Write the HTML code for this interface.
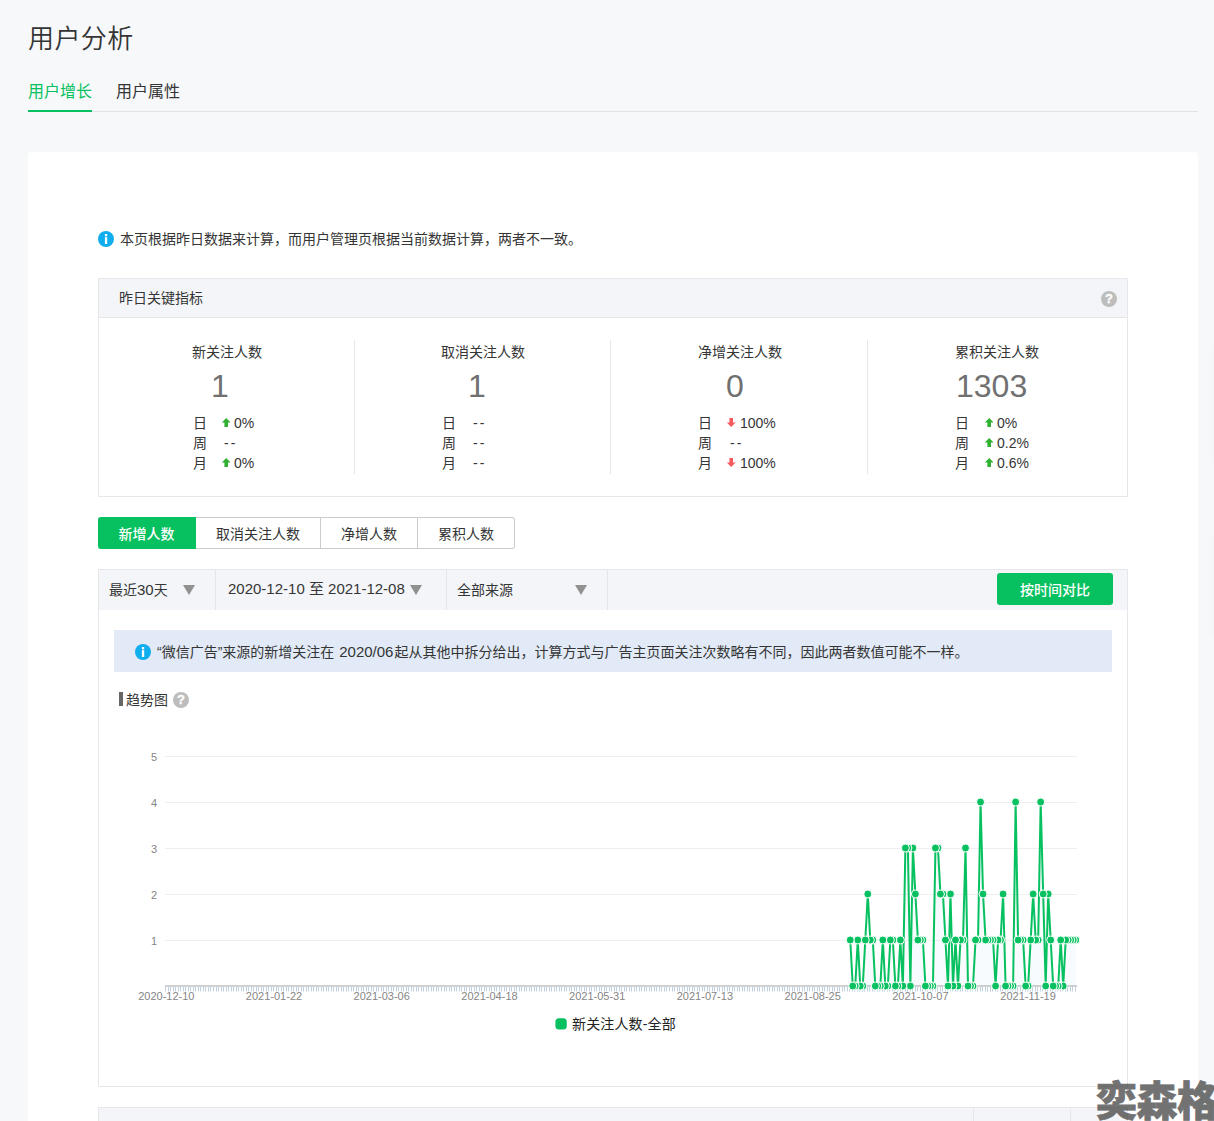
<!DOCTYPE html>
<html lang="zh-CN">
<head>
<meta charset="utf-8">
<title>用户分析</title>
<style>
*{box-sizing:border-box;margin:0;padding:0}
html,body{width:1214px;height:1121px;overflow:hidden;background:#f6f8f9}
body{position:relative;font-family:"Liberation Sans","Noto Sans CJK SC",sans-serif;font-size:14px;color:#353535;line-height:20px}
.abs{position:absolute;white-space:nowrap}
h1.title{left:28px;top:20px;font-size:26px;line-height:38px;font-weight:350;color:#353535;letter-spacing:0.4px}
.tab{top:80px;font-size:16px;line-height:24px}
.tab.on{left:28px;color:#07c160}
.tabline{left:28px;top:111px;width:1170px;height:1px;background:#e1e3e6}
.tabon{left:28px;top:110px;width:64px;height:2px;background:#07c160}
.panel{left:28px;top:152px;width:1170px;height:980px;background:#fff;border-radius:4px}
.ico{border-radius:50%;color:#fff;text-align:center;font-weight:bold}
.ico.info{width:16px;height:16px;background:#10aeef;font-size:13px;line-height:16px;font-family:"Liberation Sans",sans-serif}
.ico.help{width:16px;height:16px;background:#bdbdbd;font-size:13px;line-height:16px;-webkit-text-stroke:.3px #fff}
.box{border:1px solid #e7e7eb;background:#fff}
.boxhd{background:#f4f5f9;border-bottom:1px solid #e7e7eb}
.col{top:340px;width:257px;height:132px;text-align:center}
.vline{top:340px;width:1px;height:134px;background:#e7e7eb}
.num{font-size:32px;line-height:40px;color:#707070;font-weight:400;font-family:"Liberation Sans","Noto Sans CJK SC",sans-serif}
.row{font-size:14px;line-height:20px;height:20px}
.dash{letter-spacing:2.2px}
.seg{top:517px;height:32px;line-height:32px;text-align:center;border:1px solid #cbccd0;border-left:none;background:#fff;color:#353535}
.seg.on{background:#07c160;border-color:#07c160;color:#fff;border-radius:3px 0 0 3px;font-weight:500}
.fbar{left:99px;top:570px;width:1028px;height:40px;background:#f4f5f9}
.fdiv{top:570px;width:1px;height:40px;background:#e4e5e9}
.tri{width:0;height:0;border-left:6px solid transparent;border-right:6px solid transparent;border-top:10px solid #919191}
.btn{left:997px;top:573px;width:116px;height:32px;line-height:34px;background:#07c160;color:#fff;text-align:center;border-radius:3px;font-weight:500}
.notice{left:114px;top:630px;width:998px;height:42px;background:#e1eaf6}
svg.chart{position:absolute;left:99px;top:720px}
svg .ax{font-family:"Liberation Sans",sans-serif;font-size:11px;fill:#858585}
svg .lg{font-family:"Liberation Sans","Noto Sans CJK SC",sans-serif;font-size:14px;fill:#222;letter-spacing:0.15px}
.wm{left:1096px;top:1072px;font-size:41px;line-height:60px;font-weight:900;color:#3c3c3c;opacity:.72;font-family:"Liberation Sans","Noto Sans CJK SC",sans-serif;letter-spacing:-0.5px;-webkit-text-stroke:0.8px #3c3c3c}
</style>
</head>
<body>
<h1 class="abs title">用户分析</h1>
<div class="abs tab on">用户增长</div>
<div class="abs tab" style="left:116px">用户属性</div>
<div class="abs tabline"></div>
<div class="abs tabon"></div>

<div class="abs panel"></div>

<svg class="abs" style="left:98px;top:231px" width="16" height="16" viewBox="0 0 16 16"><circle cx="8" cy="8" r="8" fill="#10aeef"/><rect x="6.9" y="3" width="2.3" height="2.3" fill="#fff"/><rect x="6.9" y="6.2" width="2.3" height="6.8" fill="#fff"/></svg>
<div class="abs" style="left:120px;top:229px">本页根据昨日数据来计算，而用户管理页根据当前数据计算，两者不一致。</div>

<!-- key metrics -->
<div class="abs box" style="left:98px;top:278px;width:1030px;height:219px"></div>
<div class="abs boxhd" style="left:99px;top:279px;width:1028px;height:39px"></div>
<div class="abs" style="left:119px;top:288px">昨日关键指标</div>
<div class="abs ico help" style="left:1101px;top:291px">?</div>

<div class="abs vline" style="left:354px"></div>
<div class="abs vline" style="left:610px"></div>
<div class="abs vline" style="left:867px"></div>

<div class="abs" style="left:192px;top:342px">新关注人数</div>
<div class="abs num" style="left:211px;top:366px">1</div>
<div class="abs" style="left:193px;top:413px">日</div><div class="abs" style="left:193px;top:433px">周</div><div class="abs" style="left:193px;top:453px">月</div>
<svg class="abs" style="left:221px;top:418px" width="11" height="10" viewBox="0 0 11 10"><path d="M5.2 0L9.6 4.6H7V9H3.4V4.6H0.8Z" fill="#30b030"/></svg>
<div class="abs" style="left:234px;top:413px">0%</div>
<div class="abs dash" style="left:224px;top:433px">--</div>
<svg class="abs" style="left:221px;top:458px" width="11" height="10" viewBox="0 0 11 10"><path d="M5.2 0L9.6 4.6H7V9H3.4V4.6H0.8Z" fill="#30b030"/></svg>
<div class="abs" style="left:234px;top:453px">0%</div>

<div class="abs" style="left:441px;top:342px">取消关注人数</div>
<div class="abs num" style="left:468px;top:366px">1</div>
<div class="abs" style="left:442px;top:413px">日</div><div class="abs" style="left:442px;top:433px">周</div><div class="abs" style="left:442px;top:453px">月</div>
<div class="abs dash" style="left:473px;top:413px">--</div>
<div class="abs dash" style="left:473px;top:433px">--</div>
<div class="abs dash" style="left:473px;top:453px">--</div>

<div class="abs" style="left:698px;top:342px">净增关注人数</div>
<div class="abs num" style="left:726px;top:366px">0</div>
<div class="abs" style="left:698px;top:413px">日</div><div class="abs" style="left:698px;top:433px">周</div><div class="abs" style="left:698px;top:453px">月</div>
<svg class="abs" style="left:726px;top:418px" width="11" height="10" viewBox="0 0 11 10"><path d="M5.2 9L9.6 4.4H7V0H3.4V4.4H0.8Z" fill="#f55a60"/></svg>
<div class="abs" style="left:740px;top:413px">100%</div>
<div class="abs dash" style="left:730px;top:433px">--</div>
<svg class="abs" style="left:726px;top:458px" width="11" height="10" viewBox="0 0 11 10"><path d="M5.2 9L9.6 4.4H7V0H3.4V4.4H0.8Z" fill="#f55a60"/></svg>
<div class="abs" style="left:740px;top:453px">100%</div>

<div class="abs" style="left:955px;top:342px">累积关注人数</div>
<div class="abs num" style="left:956px;top:366px">1303</div>
<div class="abs" style="left:955px;top:413px">日</div><div class="abs" style="left:955px;top:433px">周</div><div class="abs" style="left:955px;top:453px">月</div>
<svg class="abs" style="left:984px;top:418px" width="11" height="10" viewBox="0 0 11 10"><path d="M5.2 0L9.6 4.6H7V9H3.4V4.6H0.8Z" fill="#30b030"/></svg>
<div class="abs" style="left:997px;top:413px">0%</div>
<svg class="abs" style="left:984px;top:438px" width="11" height="10" viewBox="0 0 11 10"><path d="M5.2 0L9.6 4.6H7V9H3.4V4.6H0.8Z" fill="#30b030"/></svg>
<div class="abs" style="left:997px;top:433px">0.2%</div>
<svg class="abs" style="left:984px;top:458px" width="11" height="10" viewBox="0 0 11 10"><path d="M5.2 0L9.6 4.6H7V9H3.4V4.6H0.8Z" fill="#30b030"/></svg>
<div class="abs" style="left:997px;top:453px">0.6%</div>

<!-- segment tabs -->
<div class="abs seg on" style="left:98px;width:98px">新增人数</div>
<div class="abs seg" style="left:196px;width:125px">取消关注人数</div>
<div class="abs seg" style="left:321px;width:97px">净增人数</div>
<div class="abs seg" style="left:418px;width:97px;border-radius:0 3px 3px 0">累积人数</div>

<!-- chart container -->
<div class="abs box" style="left:98px;top:569px;width:1030px;height:518px"></div>
<div class="abs fbar"></div>
<div class="abs fdiv" style="left:215px"></div>
<div class="abs fdiv" style="left:446px"></div>
<div class="abs fdiv" style="left:607px"></div>
<div class="abs" style="left:109px;top:580px">最近<span style="font-size:15px;line-height:20px">30</span>天</div>
<div class="abs tri" style="left:183px;top:585px"></div>
<div class="abs" style="left:228px;top:579px;font-size:15px">2020-12-10 至 2021-12-08</div>
<div class="abs tri" style="left:410px;top:585px"></div>
<div class="abs" style="left:457px;top:580px">全部来源</div>
<div class="abs tri" style="left:575px;top:585px"></div>
<div class="abs btn">按时间对比</div>

<div class="abs notice"></div>
<svg class="abs" style="left:135px;top:644px" width="16" height="16" viewBox="0 0 16 16"><circle cx="8" cy="8" r="8" fill="#10aeef"/><rect x="6.9" y="3" width="2.3" height="2.3" fill="#fff"/><rect x="6.9" y="6.2" width="2.3" height="6.8" fill="#fff"/></svg>
<div class="abs" style="left:157px;top:642px">“微信广告”来源的新增关注在 <span style="font-size:15px;line-height:20px;margin:0 1px">2020/06</span>起从其他中拆分给出，计算方式与广告主页面关注次数略有不同，因此两者数值可能不一样。</div>

<div class="abs" style="left:119px;top:692px;width:4px;height:14px;background:#666"></div>
<div class="abs" style="left:126px;top:690px">趋势图</div>
<div class="abs ico help" style="left:173px;top:692px">?</div>

<svg class="chart" width="1028" height="380" viewBox="99 720 1028 380">
<path d="M165.0 940.5H1077.0" stroke="#efefef" stroke-width="1"/>
<path d="M165.0 894.5H1077.0" stroke="#efefef" stroke-width="1"/>
<path d="M165.0 848.5H1077.0" stroke="#efefef" stroke-width="1"/>
<path d="M165.0 802.5H1077.0" stroke="#efefef" stroke-width="1"/>
<path d="M165.0 756.5H1077.0" stroke="#efefef" stroke-width="1"/>
<path d="M165.5 986.8v4.7M168.5 986.8v4.7M170.5 986.8v4.7M173.5 986.8v4.7M175.5 986.8v4.7M178.5 986.8v4.7M180.5 986.8v4.7M183.5 986.8v4.7M185.5 986.8v4.7M188.5 986.8v4.7M190.5 986.8v4.7M193.5 986.8v4.7M195.5 986.8v4.7M198.5 986.8v4.7M200.5 986.8v4.7M203.5 986.8v4.7M205.5 986.8v4.7M208.5 986.8v4.7M210.5 986.8v4.7M213.5 986.8v4.7M216.5 986.8v4.7M218.5 986.8v4.7M221.5 986.8v4.7M223.5 986.8v4.7M226.5 986.8v4.7M228.5 986.8v4.7M231.5 986.8v4.7M233.5 986.8v4.7M236.5 986.8v4.7M238.5 986.8v4.7M241.5 986.8v4.7M243.5 986.8v4.7M246.5 986.8v4.7M248.5 986.8v4.7M251.5 986.8v4.7M253.5 986.8v4.7M256.5 986.8v4.7M258.5 986.8v4.7M261.5 986.8v4.7M263.5 986.8v4.7M266.5 986.8v4.7M268.5 986.8v4.7M271.5 986.8v4.7M273.5 986.8v4.7M276.5 986.8v4.7M278.5 986.8v4.7M281.5 986.8v4.7M283.5 986.8v4.7M286.5 986.8v4.7M288.5 986.8v4.7M291.5 986.8v4.7M293.5 986.8v4.7M296.5 986.8v4.7M298.5 986.8v4.7M301.5 986.8v4.7M303.5 986.8v4.7M306.5 986.8v4.7M308.5 986.8v4.7M311.5 986.8v4.7M313.5 986.8v4.7M316.5 986.8v4.7M318.5 986.8v4.7M321.5 986.8v4.7M323.5 986.8v4.7M326.5 986.8v4.7M328.5 986.8v4.7M331.5 986.8v4.7M333.5 986.8v4.7M336.5 986.8v4.7M338.5 986.8v4.7M341.5 986.8v4.7M343.5 986.8v4.7M346.5 986.8v4.7M348.5 986.8v4.7M351.5 986.8v4.7M353.5 986.8v4.7M356.5 986.8v4.7M358.5 986.8v4.7M361.5 986.8v4.7M363.5 986.8v4.7M366.5 986.8v4.7M368.5 986.8v4.7M371.5 986.8v4.7M373.5 986.8v4.7M376.5 986.8v4.7M378.5 986.8v4.7M381.5 986.8v4.7M383.5 986.8v4.7M386.5 986.8v4.7M388.5 986.8v4.7M391.5 986.8v4.7M393.5 986.8v4.7M396.5 986.8v4.7M398.5 986.8v4.7M401.5 986.8v4.7M403.5 986.8v4.7M406.5 986.8v4.7M408.5 986.8v4.7M411.5 986.8v4.7M413.5 986.8v4.7M416.5 986.8v4.7M418.5 986.8v4.7M421.5 986.8v4.7M423.5 986.8v4.7M426.5 986.8v4.7M428.5 986.8v4.7M431.5 986.8v4.7M433.5 986.8v4.7M436.5 986.8v4.7M438.5 986.8v4.7M441.5 986.8v4.7M444.5 986.8v4.7M446.5 986.8v4.7M449.5 986.8v4.7M451.5 986.8v4.7M454.5 986.8v4.7M456.5 986.8v4.7M459.5 986.8v4.7M461.5 986.8v4.7M464.5 986.8v4.7M466.5 986.8v4.7M469.5 986.8v4.7M471.5 986.8v4.7M474.5 986.8v4.7M476.5 986.8v4.7M479.5 986.8v4.7M481.5 986.8v4.7M484.5 986.8v4.7M486.5 986.8v4.7M489.5 986.8v4.7M491.5 986.8v4.7M494.5 986.8v4.7M496.5 986.8v4.7M499.5 986.8v4.7M501.5 986.8v4.7M504.5 986.8v4.7M506.5 986.8v4.7M509.5 986.8v4.7M511.5 986.8v4.7M514.5 986.8v4.7M516.5 986.8v4.7M519.5 986.8v4.7M521.5 986.8v4.7M524.5 986.8v4.7M526.5 986.8v4.7M529.5 986.8v4.7M531.5 986.8v4.7M534.5 986.8v4.7M536.5 986.8v4.7M539.5 986.8v4.7M541.5 986.8v4.7M544.5 986.8v4.7M546.5 986.8v4.7M549.5 986.8v4.7M551.5 986.8v4.7M554.5 986.8v4.7M556.5 986.8v4.7M559.5 986.8v4.7M561.5 986.8v4.7M564.5 986.8v4.7M566.5 986.8v4.7M569.5 986.8v4.7M571.5 986.8v4.7M574.5 986.8v4.7M576.5 986.8v4.7M579.5 986.8v4.7M581.5 986.8v4.7M584.5 986.8v4.7M586.5 986.8v4.7M589.5 986.8v4.7M591.5 986.8v4.7M594.5 986.8v4.7M596.5 986.8v4.7M599.5 986.8v4.7M601.5 986.8v4.7M604.5 986.8v4.7M606.5 986.8v4.7M609.5 986.8v4.7M611.5 986.8v4.7M614.5 986.8v4.7M616.5 986.8v4.7M619.5 986.8v4.7M621.5 986.8v4.7M624.5 986.8v4.7M626.5 986.8v4.7M629.5 986.8v4.7M631.5 986.8v4.7M634.5 986.8v4.7M636.5 986.8v4.7M639.5 986.8v4.7M641.5 986.8v4.7M644.5 986.8v4.7M646.5 986.8v4.7M649.5 986.8v4.7M651.5 986.8v4.7M654.5 986.8v4.7M656.5 986.8v4.7M659.5 986.8v4.7M661.5 986.8v4.7M664.5 986.8v4.7M666.5 986.8v4.7M669.5 986.8v4.7M672.5 986.8v4.7M674.5 986.8v4.7M677.5 986.8v4.7M679.5 986.8v4.7M682.5 986.8v4.7M684.5 986.8v4.7M687.5 986.8v4.7M689.5 986.8v4.7M692.5 986.8v4.7M694.5 986.8v4.7M697.5 986.8v4.7M699.5 986.8v4.7M702.5 986.8v4.7M704.5 986.8v4.7M707.5 986.8v4.7M709.5 986.8v4.7M712.5 986.8v4.7M714.5 986.8v4.7M717.5 986.8v4.7M719.5 986.8v4.7M722.5 986.8v4.7M724.5 986.8v4.7M727.5 986.8v4.7M729.5 986.8v4.7M732.5 986.8v4.7M734.5 986.8v4.7M737.5 986.8v4.7M739.5 986.8v4.7M742.5 986.8v4.7M744.5 986.8v4.7M747.5 986.8v4.7M749.5 986.8v4.7M752.5 986.8v4.7M754.5 986.8v4.7M757.5 986.8v4.7M759.5 986.8v4.7M762.5 986.8v4.7M764.5 986.8v4.7M767.5 986.8v4.7M769.5 986.8v4.7M772.5 986.8v4.7M774.5 986.8v4.7M777.5 986.8v4.7M779.5 986.8v4.7M782.5 986.8v4.7M784.5 986.8v4.7M787.5 986.8v4.7M789.5 986.8v4.7M792.5 986.8v4.7M794.5 986.8v4.7M797.5 986.8v4.7M799.5 986.8v4.7M802.5 986.8v4.7M804.5 986.8v4.7M807.5 986.8v4.7M809.5 986.8v4.7M812.5 986.8v4.7M814.5 986.8v4.7M817.5 986.8v4.7M819.5 986.8v4.7M822.5 986.8v4.7M824.5 986.8v4.7M827.5 986.8v4.7M829.5 986.8v4.7M832.5 986.8v4.7M834.5 986.8v4.7M837.5 986.8v4.7M839.5 986.8v4.7M842.5 986.8v4.7M844.5 986.8v4.7M847.5 986.8v4.7M849.5 986.8v4.7M852.5 986.8v4.7M854.5 986.8v4.7M857.5 986.8v4.7M859.5 986.8v4.7M862.5 986.8v4.7M864.5 986.8v4.7M867.5 986.8v4.7M869.5 986.8v4.7M872.5 986.8v4.7M874.5 986.8v4.7M877.5 986.8v4.7M879.5 986.8v4.7M882.5 986.8v4.7M884.5 986.8v4.7M887.5 986.8v4.7M889.5 986.8v4.7M892.5 986.8v4.7M894.5 986.8v4.7M897.5 986.8v4.7M900.5 986.8v4.7M902.5 986.8v4.7M905.5 986.8v4.7M907.5 986.8v4.7M910.5 986.8v4.7M912.5 986.8v4.7M915.5 986.8v4.7M917.5 986.8v4.7M920.5 986.8v4.7M922.5 986.8v4.7M925.5 986.8v4.7M927.5 986.8v4.7M930.5 986.8v4.7M932.5 986.8v4.7M935.5 986.8v4.7M937.5 986.8v4.7M940.5 986.8v4.7M942.5 986.8v4.7M945.5 986.8v4.7M947.5 986.8v4.7M950.5 986.8v4.7M952.5 986.8v4.7M955.5 986.8v4.7M957.5 986.8v4.7M960.5 986.8v4.7M962.5 986.8v4.7M965.5 986.8v4.7M967.5 986.8v4.7M970.5 986.8v4.7M972.5 986.8v4.7M975.5 986.8v4.7M977.5 986.8v4.7M980.5 986.8v4.7M982.5 986.8v4.7M985.5 986.8v4.7M987.5 986.8v4.7M990.5 986.8v4.7M992.5 986.8v4.7M995.5 986.8v4.7M997.5 986.8v4.7M1000.5 986.8v4.7M1002.5 986.8v4.7M1005.5 986.8v4.7M1007.5 986.8v4.7M1010.5 986.8v4.7M1012.5 986.8v4.7M1015.5 986.8v4.7M1017.5 986.8v4.7M1020.5 986.8v4.7M1022.5 986.8v4.7M1025.5 986.8v4.7M1027.5 986.8v4.7M1030.5 986.8v4.7M1032.5 986.8v4.7M1035.5 986.8v4.7M1037.5 986.8v4.7M1040.5 986.8v4.7M1042.5 986.8v4.7M1045.5 986.8v4.7M1047.5 986.8v4.7M1050.5 986.8v4.7M1052.5 986.8v4.7M1055.5 986.8v4.7M1057.5 986.8v4.7M1060.5 986.8v4.7M1062.5 986.8v4.7M1065.5 986.8v4.7M1067.5 986.8v4.7M1070.5 986.8v4.7M1072.5 986.8v4.7M1075.5 986.8v4.7" stroke="#c0d0e0" stroke-width="1" fill="none"/>
<path d="M165.0 986H1077.0" stroke="#c2c2c2" stroke-width="1.6"/>
<path d="M850.25 940.00 L852.76 986.00 L855.26 986.00 L857.77 940.00 L860.27 986.00 L862.78 986.00 L865.29 940.00 L867.79 894.00 L870.30 940.00 L872.80 940.00 L875.31 986.00 L877.81 986.00 L880.32 986.00 L882.82 940.00 L885.33 986.00 L887.84 986.00 L890.34 940.00 L892.85 940.00 L895.35 986.00 L897.86 986.00 L900.36 940.00 L902.87 986.00 L905.37 848.00 L907.88 848.00 L910.38 986.00 L912.89 848.00 L915.40 894.00 L917.90 940.00 L920.41 940.00 L922.91 940.00 L925.42 986.00 L927.92 986.00 L930.43 986.00 L932.93 986.00 L935.44 848.00 L937.95 848.00 L940.45 894.00 L942.96 894.00 L945.46 940.00 L947.97 986.00 L950.47 894.00 L952.98 986.00 L955.48 940.00 L957.99 986.00 L960.49 940.00 L963.00 940.00 L965.51 848.00 L968.01 986.00 L970.52 986.00 L973.02 986.00 L975.53 940.00 L978.03 940.00 L980.54 802.00 L983.04 894.00 L985.55 940.00 L988.05 940.00 L990.56 940.00 L993.07 940.00 L995.57 986.00 L998.08 940.00 L1000.58 940.00 L1003.09 894.00 L1005.59 986.00 L1008.10 986.00 L1010.60 986.00 L1013.11 986.00 L1015.62 802.00 L1018.12 940.00 L1020.63 940.00 L1023.13 940.00 L1025.64 986.00 L1028.14 986.00 L1030.65 940.00 L1033.15 894.00 L1035.66 940.00 L1038.16 940.00 L1040.67 802.00 L1043.18 894.00 L1045.68 986.00 L1048.19 894.00 L1050.69 940.00 L1053.20 986.00 L1055.70 986.00 L1058.21 986.00 L1060.71 940.00 L1063.22 986.00 L1065.73 940.00 L1068.23 940.00 L1070.74 940.00 L1073.24 940.00 L1075.75 940.00 L1075.75 986.0 L850.25 986.0Z" fill="#3d8fd1" fill-opacity="0.04"/>
<path d="M850.25 940.00 L852.76 986.00 L855.26 986.00 L857.77 940.00 L860.27 986.00 L862.78 986.00 L865.29 940.00 L867.79 894.00 L870.30 940.00 L872.80 940.00 L875.31 986.00 L877.81 986.00 L880.32 986.00 L882.82 940.00 L885.33 986.00 L887.84 986.00 L890.34 940.00 L892.85 940.00 L895.35 986.00 L897.86 986.00 L900.36 940.00 L902.87 986.00 L905.37 848.00 L907.88 848.00 L910.38 986.00 L912.89 848.00 L915.40 894.00 L917.90 940.00 L920.41 940.00 L922.91 940.00 L925.42 986.00 L927.92 986.00 L930.43 986.00 L932.93 986.00 L935.44 848.00 L937.95 848.00 L940.45 894.00 L942.96 894.00 L945.46 940.00 L947.97 986.00 L950.47 894.00 L952.98 986.00 L955.48 940.00 L957.99 986.00 L960.49 940.00 L963.00 940.00 L965.51 848.00 L968.01 986.00 L970.52 986.00 L973.02 986.00 L975.53 940.00 L978.03 940.00 L980.54 802.00 L983.04 894.00 L985.55 940.00 L988.05 940.00 L990.56 940.00 L993.07 940.00 L995.57 986.00 L998.08 940.00 L1000.58 940.00 L1003.09 894.00 L1005.59 986.00 L1008.10 986.00 L1010.60 986.00 L1013.11 986.00 L1015.62 802.00 L1018.12 940.00 L1020.63 940.00 L1023.13 940.00 L1025.64 986.00 L1028.14 986.00 L1030.65 940.00 L1033.15 894.00 L1035.66 940.00 L1038.16 940.00 L1040.67 802.00 L1043.18 894.00 L1045.68 986.00 L1048.19 894.00 L1050.69 940.00 L1053.20 986.00 L1055.70 986.00 L1058.21 986.00 L1060.71 940.00 L1063.22 986.00 L1065.73 940.00 L1068.23 940.00 L1070.74 940.00 L1073.24 940.00 L1075.75 940.00" fill="none" stroke="#07c160" stroke-width="2" stroke-linejoin="round" stroke-linecap="round"/>
<circle cx="1075.75" cy="940.00" r="4" fill="#07c160" stroke="#fff" stroke-width="1"/>
<circle cx="1073.24" cy="940.00" r="4" fill="#07c160" stroke="#fff" stroke-width="1"/>
<circle cx="1070.74" cy="940.00" r="4" fill="#07c160" stroke="#fff" stroke-width="1"/>
<circle cx="1068.23" cy="940.00" r="4" fill="#07c160" stroke="#fff" stroke-width="1"/>
<circle cx="1065.73" cy="940.00" r="4" fill="#07c160" stroke="#fff" stroke-width="1"/>
<circle cx="1063.22" cy="986.00" r="4" fill="#07c160" stroke="#fff" stroke-width="1"/>
<circle cx="1060.71" cy="940.00" r="4" fill="#07c160" stroke="#fff" stroke-width="1"/>
<circle cx="1058.21" cy="986.00" r="4" fill="#07c160" stroke="#fff" stroke-width="1"/>
<circle cx="1055.70" cy="986.00" r="4" fill="#07c160" stroke="#fff" stroke-width="1"/>
<circle cx="1053.20" cy="986.00" r="4" fill="#07c160" stroke="#fff" stroke-width="1"/>
<circle cx="1050.69" cy="940.00" r="4" fill="#07c160" stroke="#fff" stroke-width="1"/>
<circle cx="1048.19" cy="894.00" r="4" fill="#07c160" stroke="#fff" stroke-width="1"/>
<circle cx="1045.68" cy="986.00" r="4" fill="#07c160" stroke="#fff" stroke-width="1"/>
<circle cx="1043.18" cy="894.00" r="4" fill="#07c160" stroke="#fff" stroke-width="1"/>
<circle cx="1040.67" cy="802.00" r="4" fill="#07c160" stroke="#fff" stroke-width="1"/>
<circle cx="1038.16" cy="940.00" r="4" fill="#07c160" stroke="#fff" stroke-width="1"/>
<circle cx="1035.66" cy="940.00" r="4" fill="#07c160" stroke="#fff" stroke-width="1"/>
<circle cx="1033.15" cy="894.00" r="4" fill="#07c160" stroke="#fff" stroke-width="1"/>
<circle cx="1030.65" cy="940.00" r="4" fill="#07c160" stroke="#fff" stroke-width="1"/>
<circle cx="1028.14" cy="986.00" r="4" fill="#07c160" stroke="#fff" stroke-width="1"/>
<circle cx="1025.64" cy="986.00" r="4" fill="#07c160" stroke="#fff" stroke-width="1"/>
<circle cx="1023.13" cy="940.00" r="4" fill="#07c160" stroke="#fff" stroke-width="1"/>
<circle cx="1020.63" cy="940.00" r="4" fill="#07c160" stroke="#fff" stroke-width="1"/>
<circle cx="1018.12" cy="940.00" r="4" fill="#07c160" stroke="#fff" stroke-width="1"/>
<circle cx="1015.62" cy="802.00" r="4" fill="#07c160" stroke="#fff" stroke-width="1"/>
<circle cx="1013.11" cy="986.00" r="4" fill="#07c160" stroke="#fff" stroke-width="1"/>
<circle cx="1010.60" cy="986.00" r="4" fill="#07c160" stroke="#fff" stroke-width="1"/>
<circle cx="1008.10" cy="986.00" r="4" fill="#07c160" stroke="#fff" stroke-width="1"/>
<circle cx="1005.59" cy="986.00" r="4" fill="#07c160" stroke="#fff" stroke-width="1"/>
<circle cx="1003.09" cy="894.00" r="4" fill="#07c160" stroke="#fff" stroke-width="1"/>
<circle cx="1000.58" cy="940.00" r="4" fill="#07c160" stroke="#fff" stroke-width="1"/>
<circle cx="998.08" cy="940.00" r="4" fill="#07c160" stroke="#fff" stroke-width="1"/>
<circle cx="995.57" cy="986.00" r="4" fill="#07c160" stroke="#fff" stroke-width="1"/>
<circle cx="993.07" cy="940.00" r="4" fill="#07c160" stroke="#fff" stroke-width="1"/>
<circle cx="990.56" cy="940.00" r="4" fill="#07c160" stroke="#fff" stroke-width="1"/>
<circle cx="988.05" cy="940.00" r="4" fill="#07c160" stroke="#fff" stroke-width="1"/>
<circle cx="985.55" cy="940.00" r="4" fill="#07c160" stroke="#fff" stroke-width="1"/>
<circle cx="983.04" cy="894.00" r="4" fill="#07c160" stroke="#fff" stroke-width="1"/>
<circle cx="980.54" cy="802.00" r="4" fill="#07c160" stroke="#fff" stroke-width="1"/>
<circle cx="978.03" cy="940.00" r="4" fill="#07c160" stroke="#fff" stroke-width="1"/>
<circle cx="975.53" cy="940.00" r="4" fill="#07c160" stroke="#fff" stroke-width="1"/>
<circle cx="973.02" cy="986.00" r="4" fill="#07c160" stroke="#fff" stroke-width="1"/>
<circle cx="970.52" cy="986.00" r="4" fill="#07c160" stroke="#fff" stroke-width="1"/>
<circle cx="968.01" cy="986.00" r="4" fill="#07c160" stroke="#fff" stroke-width="1"/>
<circle cx="965.51" cy="848.00" r="4" fill="#07c160" stroke="#fff" stroke-width="1"/>
<circle cx="963.00" cy="940.00" r="4" fill="#07c160" stroke="#fff" stroke-width="1"/>
<circle cx="960.49" cy="940.00" r="4" fill="#07c160" stroke="#fff" stroke-width="1"/>
<circle cx="957.99" cy="986.00" r="4" fill="#07c160" stroke="#fff" stroke-width="1"/>
<circle cx="955.48" cy="940.00" r="4" fill="#07c160" stroke="#fff" stroke-width="1"/>
<circle cx="952.98" cy="986.00" r="4" fill="#07c160" stroke="#fff" stroke-width="1"/>
<circle cx="950.47" cy="894.00" r="4" fill="#07c160" stroke="#fff" stroke-width="1"/>
<circle cx="947.97" cy="986.00" r="4" fill="#07c160" stroke="#fff" stroke-width="1"/>
<circle cx="945.46" cy="940.00" r="4" fill="#07c160" stroke="#fff" stroke-width="1"/>
<circle cx="942.96" cy="894.00" r="4" fill="#07c160" stroke="#fff" stroke-width="1"/>
<circle cx="940.45" cy="894.00" r="4" fill="#07c160" stroke="#fff" stroke-width="1"/>
<circle cx="937.95" cy="848.00" r="4" fill="#07c160" stroke="#fff" stroke-width="1"/>
<circle cx="935.44" cy="848.00" r="4" fill="#07c160" stroke="#fff" stroke-width="1"/>
<circle cx="932.93" cy="986.00" r="4" fill="#07c160" stroke="#fff" stroke-width="1"/>
<circle cx="930.43" cy="986.00" r="4" fill="#07c160" stroke="#fff" stroke-width="1"/>
<circle cx="927.92" cy="986.00" r="4" fill="#07c160" stroke="#fff" stroke-width="1"/>
<circle cx="925.42" cy="986.00" r="4" fill="#07c160" stroke="#fff" stroke-width="1"/>
<circle cx="922.91" cy="940.00" r="4" fill="#07c160" stroke="#fff" stroke-width="1"/>
<circle cx="920.41" cy="940.00" r="4" fill="#07c160" stroke="#fff" stroke-width="1"/>
<circle cx="917.90" cy="940.00" r="4" fill="#07c160" stroke="#fff" stroke-width="1"/>
<circle cx="915.40" cy="894.00" r="4" fill="#07c160" stroke="#fff" stroke-width="1"/>
<circle cx="912.89" cy="848.00" r="4" fill="#07c160" stroke="#fff" stroke-width="1"/>
<circle cx="910.38" cy="986.00" r="4" fill="#07c160" stroke="#fff" stroke-width="1"/>
<circle cx="907.88" cy="848.00" r="4" fill="#07c160" stroke="#fff" stroke-width="1"/>
<circle cx="905.37" cy="848.00" r="4" fill="#07c160" stroke="#fff" stroke-width="1"/>
<circle cx="902.87" cy="986.00" r="4" fill="#07c160" stroke="#fff" stroke-width="1"/>
<circle cx="900.36" cy="940.00" r="4" fill="#07c160" stroke="#fff" stroke-width="1"/>
<circle cx="897.86" cy="986.00" r="4" fill="#07c160" stroke="#fff" stroke-width="1"/>
<circle cx="895.35" cy="986.00" r="4" fill="#07c160" stroke="#fff" stroke-width="1"/>
<circle cx="892.85" cy="940.00" r="4" fill="#07c160" stroke="#fff" stroke-width="1"/>
<circle cx="890.34" cy="940.00" r="4" fill="#07c160" stroke="#fff" stroke-width="1"/>
<circle cx="887.84" cy="986.00" r="4" fill="#07c160" stroke="#fff" stroke-width="1"/>
<circle cx="885.33" cy="986.00" r="4" fill="#07c160" stroke="#fff" stroke-width="1"/>
<circle cx="882.82" cy="940.00" r="4" fill="#07c160" stroke="#fff" stroke-width="1"/>
<circle cx="880.32" cy="986.00" r="4" fill="#07c160" stroke="#fff" stroke-width="1"/>
<circle cx="877.81" cy="986.00" r="4" fill="#07c160" stroke="#fff" stroke-width="1"/>
<circle cx="875.31" cy="986.00" r="4" fill="#07c160" stroke="#fff" stroke-width="1"/>
<circle cx="872.80" cy="940.00" r="4" fill="#07c160" stroke="#fff" stroke-width="1"/>
<circle cx="870.30" cy="940.00" r="4" fill="#07c160" stroke="#fff" stroke-width="1"/>
<circle cx="867.79" cy="894.00" r="4" fill="#07c160" stroke="#fff" stroke-width="1"/>
<circle cx="865.29" cy="940.00" r="4" fill="#07c160" stroke="#fff" stroke-width="1"/>
<circle cx="862.78" cy="986.00" r="4" fill="#07c160" stroke="#fff" stroke-width="1"/>
<circle cx="860.27" cy="986.00" r="4" fill="#07c160" stroke="#fff" stroke-width="1"/>
<circle cx="857.77" cy="940.00" r="4" fill="#07c160" stroke="#fff" stroke-width="1"/>
<circle cx="855.26" cy="986.00" r="4" fill="#07c160" stroke="#fff" stroke-width="1"/>
<circle cx="852.76" cy="986.00" r="4" fill="#07c160" stroke="#fff" stroke-width="1"/>
<circle cx="850.25" cy="940.00" r="4" fill="#07c160" stroke="#fff" stroke-width="1"/>
<text x="157" y="944.5" text-anchor="end" class="ax">1</text>
<text x="157" y="898.5" text-anchor="end" class="ax">2</text>
<text x="157" y="852.5" text-anchor="end" class="ax">3</text>
<text x="157" y="806.5" text-anchor="end" class="ax">4</text>
<text x="157" y="760.5" text-anchor="end" class="ax">5</text>
<text x="166.3" y="1000" text-anchor="middle" class="ax">2020-12-10</text>
<text x="274.0" y="1000" text-anchor="middle" class="ax">2021-01-22</text>
<text x="381.7" y="1000" text-anchor="middle" class="ax">2021-03-06</text>
<text x="489.5" y="1000" text-anchor="middle" class="ax">2021-04-18</text>
<text x="597.2" y="1000" text-anchor="middle" class="ax">2021-05-31</text>
<text x="704.9" y="1000" text-anchor="middle" class="ax">2021-07-13</text>
<text x="812.7" y="1000" text-anchor="middle" class="ax">2021-08-25</text>
<text x="920.4" y="1000" text-anchor="middle" class="ax">2021-10-07</text>
<text x="1028.1" y="1000" text-anchor="middle" class="ax">2021-11-19</text>
<rect x="555.4" y="1018.2" width="11.4" height="11.4" rx="3.6" fill="#07c160"/>
<text x="572" y="1029" class="lg">新关注人数-全部</text>
</svg>

<!-- next table -->
<div class="abs" style="left:98px;top:1107px;width:1030px;height:30px;background:#f4f5f9;border:1px solid #e7e7eb"></div>
<div class="abs" style="left:973px;top:1108px;width:1px;height:20px;background:#e7e7eb"></div>
<div class="abs" style="left:1070px;top:1108px;width:1px;height:20px;background:#e7e7eb"></div>

<div class="abs" style="left:1217px;top:345px;width:40px;height:115px;box-shadow:0 0 10px rgba(0,0,0,.06)"></div>
<div class="abs" style="left:1217px;top:535px;width:40px;height:100px;box-shadow:0 0 10px rgba(0,0,0,.06)"></div>
<div class="abs wm">奕森格</div>
</body>
</html>
